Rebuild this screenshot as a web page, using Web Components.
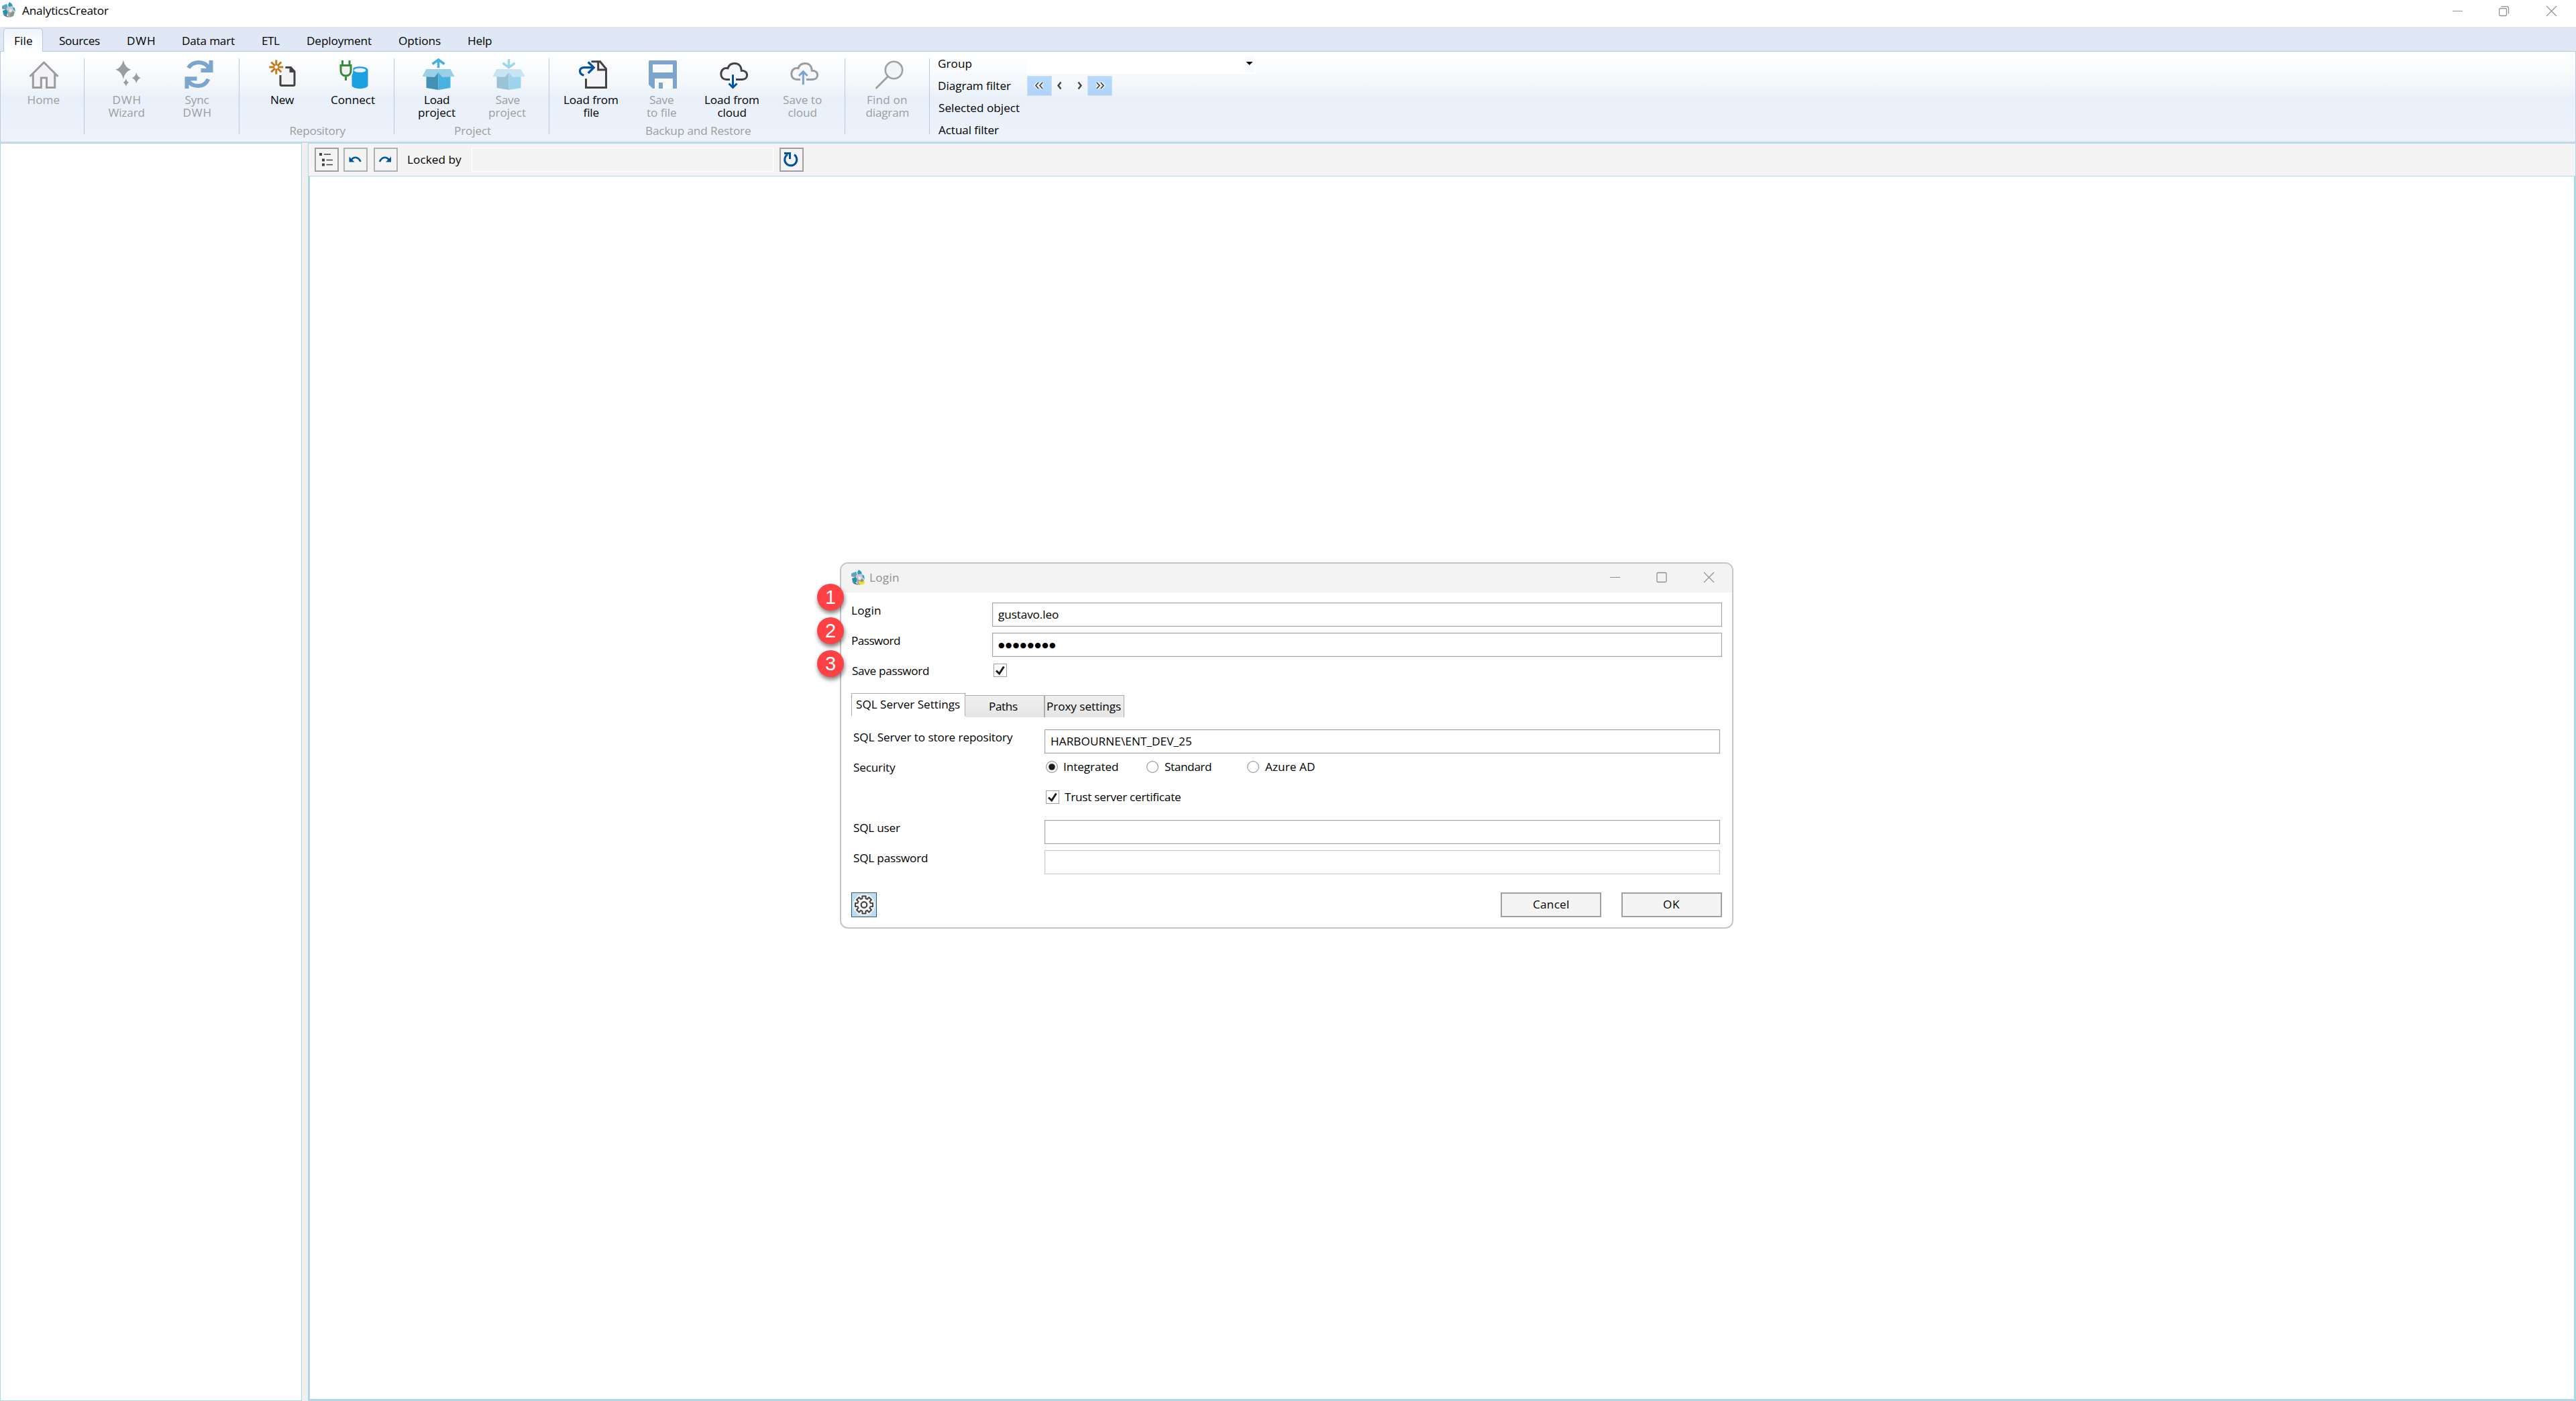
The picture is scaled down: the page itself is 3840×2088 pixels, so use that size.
<!DOCTYPE html>
<html lang="en">
<head>
<meta charset="utf-8">
<title>AnalyticsCreator</title>
<style>
html,body{margin:0;padding:0;width:3840px;height:2088px;overflow:hidden;background:#fff}
body{font-family:"Open Sans","Noto Sans",sans-serif;font-size:17.200px;color:#000}
</style>
</head>
<body>
<ac-app></ac-app>
<script>
const pen = document.createElement('canvas').getContext('2d');

function define(name, html, setup) {
  customElements.define(name, class extends HTMLElement {
    connectedCallback() {
      if (this.shadowRoot) return;
      const root = this.attachShadow({ mode: 'open' });
      const t = document.createElement('template');
      t.innerHTML = typeof html === 'function' ? html(this) : html;
      root.append(t.content.cloneNode(true));
      if (setup) setup(this, root);
    }
  });
}

/* A single line of text tracked to an exact ink width (attribute w). */
define('ac-text', el => `<style>:host{display:block;flex:none;white-space:pre;line-height:20px;height:20px;box-sizing:content-box}span{display:block}</style><span>${el.getAttribute('t')}</span>`,
  (el, root) => {
    const span = root.querySelector('span'), text = el.getAttribute('t'), w = +el.getAttribute('w');
    el.style.width = w + 'px';
    const cs = getComputedStyle(el);
    pen.font = cs.fontWeight + ' ' + cs.fontSize + ' ' + cs.fontFamily;
    const m = pen.measureText(text);
    span.style.letterSpacing = ((w - m.actualBoundingBoxRight - m.actualBoundingBoxLeft) / (text.length - 1)) + 'px';
    span.style.marginLeft = m.actualBoundingBoxLeft + 'px';
    span.style.width = (w + 10) + 'px';
  });

const star = (x, y, a, b) => `<path d="M${x} ${y-b}Q${x+a*.22} ${y-b*.22} ${x+a} ${y}Q${x+a*.22} ${y+b*.22} ${x} ${y+b}Q${x-a*.22} ${y+b*.22} ${x-a} ${y}Q${x-a*.22} ${y-b*.22} ${x} ${y-b}Z" fill="#9b9c9e"/>`;
const box = `<path d="M7.5 24V43L25.5 46V18Z" fill="#4491b5"/><path d="M43.5 24V43L25.5 46V18Z" fill="#4ab2e0"/><path d="M1.5 26L7.5 15H25.5V20L19.5 27Z" fill="#99d0e6"/><path d="M49.5 26L43.5 15H25.5V20L31.5 27Z" fill="#99d0e6"/>`;
const cloud = c => `<path d="M21 30.4H15.5C10.5 30.4 7.8 27 7.8 22.3C7.8 16.5 12 12.6 18 13.8C19.5 9 23 6.5 28 6.5C34 6.5 38 10.5 38.3 17.2C43 17.2 46.6 19.6 46.6 24C46.6 28 43.5 30.4 39.5 30.4H30" fill="#f5f7fa" stroke="${c}" stroke-width="3"/>`;
const cubes = `<path d="M10 4L12 0L16 3L17 7L11 8Z" fill="#2b9cc0"/><path d="M1 6L8 3L10 8L7 12L1 10Z" fill="#8b979b"/><path d="M1 6L8 3L9 6L3 8.500Z" fill="#3cb2d4"/><path d="M8 8L16 6L20 12L18 17L10 17Z" fill="#c3c8ca"/><path d="M2 13L8 11L10 15L8 20L3 18Z" fill="#1f91b4"/><path d="M9 14L13 10L14 21L10 23Z" fill="#a2aaad"/><path d="M14 13L20 15L18 21L12 23Z" fill="#8b9497"/><path d="M12 10L16 11L15 16L11 14Z" fill="#e6e9ea"/><path d="M2 18L8 20L11 23L5 21Z" fill="#5c6669"/><path d="M17 7L20 9L21 15L18 11Z" fill="#2b9cc0"/>`;
const ICONS = {
  home: `<path d="M8.3 20L24.5 5L40.7 20V42.5H28.5V28H20.3V42.5H8.3Z" fill="#f4f4f6"/><path d="M3.5 26L24.5 5L45.5 26M8.3 22V42.5H20.3V28H28.5V42.5H40.7V22" fill="none" stroke="#9b9c9e" stroke-width="3"/>`,
  wizard: star(18.8,15.7,11.4,14) + star(38.2,28.3,6.4,8.2) + star(22.8,35,4.6,6),
  sync: `<g fill="none" stroke="#7ba5cd" stroke-width="6"><path d="M11 13.2C17 2.5 35 1.5 42 14"/><path d="M10 32C17 43 35 43 40.5 29.8"/></g><path d="M41.5 2H47.5V20H29.5V14H37L41.5 9ZM5.500 26.300H23.500V32.300H13L11.500 36V44H5.500Z" fill="#7ba5cd"/>`,
  new: `<path d="M26 12.500H35L41 18.500V38Q41 39.500 39.500 39.500H21.500Q20 39.500 20 38V22Z" fill="#f3f3f5"/><path d="M27.500 12.500H35.500L41 18.500V38Q41 39.500 39.500 39.500H21.500Q20 39.500 20 38V24" fill="none" stroke="#424242" stroke-width="3"/><path d="M33.500 12H36L42 18V20H33.500Z" fill="#424242"/><g stroke="#c27a14" stroke-width="3"><path d="M13.800 1.500V9.500M13.800 14.500V22.500M3.300 12H11.300M16.300 12H24.300M6.300 4.500L12 10.200M15.600 13.800L21.300 19.500M21.300 4.500L15.600 10.200M12 13.800L6.300 19.500"/></g>`,
  connect: `<path d="M21.500 16.500V39C21.500 45.700 45.500 45.700 45.500 39V16.500C45.500 9.500 21.500 9.500 21.500 16.500Z" fill="#1ba1e2"/><ellipse cx="33.500" cy="16.700" rx="9" ry="3.100" fill="#eef0f3"/><path d="M5 9.500H20V17C20 22 17 25 12.500 25S5 22 5 17Z" fill="#f0f0f2" stroke="#f5f7fa" stroke-width="7"/><path d="M7.500 2V9.500M18 2V9.500M3.500 9.500H21.500M5 9.500V17C5 22 8 25 12.500 25S20 22 20 17V9.500M12.500 25V32" fill="none" stroke="#388a34" stroke-width="3"/>`,
  loadp: box + `<path d="M25.500 13V1.500M16.500 7.500L25.500 1L34.500 7.500" fill="none" stroke="#45b0de" stroke-width="3.500"/>`,
  savep: `<g opacity=".5">${box}<path d="M25.500 0V12.500M16.500 6L25.500 12.500L34.500 6" fill="none" stroke="#45b0de" stroke-width="3.500"/></g>`,
  loadf: `<path d="M16.500 43V22L24 2.700H36.300L46.500 14V43Z" fill="#f5f5f7"/><path d="M24.500 3.700H37.500L46.500 14.500V42.500H16.500V29.300M34.700 3V16H46" fill="none" stroke="#424242" stroke-width="3"/><path d="M13.500 24.300C5.500 22 5.500 12.700 13.500 12.700H28M19.700 4.500L28.200 12.700L19.700 21" fill="none" stroke="#00539c" stroke-width="3.200"/>`,
  savef: `<path fill-rule="evenodd" d="M5 4Q5 2 7 2H45Q47 2 47 4V44H41V29H14V44H11L5 38ZM11 8V20H41V8ZM20 35H26V44H20Z" fill="#7ba5cd"/><path d="M11 8H41V20H11ZM14 29H41V44H26V35H20V44H14Z" fill="#f8fafc"/>`,
  loadc: cloud('#424242') + `<path d="M25.500 23.300V42M19.500 36.500L25.500 42.500L31.500 36.500" fill="none" stroke="#00539c" stroke-width="3"/>`,
  savec: cloud('#9b9c9e') + `<path d="M25.300 38V19M19 25L25.300 18.700L31.600 25" fill="none" stroke="#7ba5cd" stroke-width="3"/>`,
  find: `<circle cx="33.500" cy="16.500" r="12.700" fill="#f3f4f6" stroke="#a0a0a0" stroke-width="2.600"/><path d="M24.500 26L7.500 43" stroke="#a0a0a0" stroke-width="3" stroke-linecap="round"/>`
};

define('ribbon-item', el => `<style>
:host{display:flex;flex-direction:column;align-items:center;width:105px;flex:none;color:#000}
:host([off]){color:#9d9d9d}
svg{width:48px;height:48px;overflow:visible;display:block;margin-bottom:3px}
ac-text{line-height:19px;height:19px}
</style><svg viewBox="0 0 48 48">${ICONS[el.getAttribute('icon')]}</svg>` +
el.getAttribute('lines').split('|').map(s => { const [t, w] = s.split(':'); return `<ac-text t="${t}" w="${w}"></ac-text>`; }).join(''));

define('ribbon-group', el => { const [t, w] = (el.getAttribute('caption') || '').split(':'); return `<style>
:host{display:flex;flex-direction:column;justify-content:space-between;align-items:center;box-sizing:border-box;height:113px;margin-top:10px;border-right:1px solid #b7cade;flex:none}
.items{display:flex;width:100%;box-sizing:border-box;padding:1px 0 0 var(--pad)}
ac-text{color:#9d9d9d;margin:0 0 -5px 4px}
</style><div class="items"><slot></slot></div>${t ? `<ac-text t="${t}" w="${w}"></ac-text>` : ''}`; });

define('menu-tabs', `<style>
:host{display:flex;height:37px;padding-top:2px;box-sizing:border-box;background:#dfe8f4;box-shadow:inset 0 -1px #b5c9e2}
.tab{box-sizing:border-box;width:59px;margin-left:5px;height:35px;border:1px solid #b5c9e2;border-bottom:0;border-radius:5px 5px 0 0;background:linear-gradient(#eff5fc,#fff);padding:8px 0 0 16px}
.rest{display:flex;padding:9px 0 0 24px}
</style><div class="tab"><ac-text t="File" w="26"></ac-text></div><div class="rest">
<ac-text t="Sources" w="61"></ac-text>
<ac-text style="margin-left:41px" t="DWH" w="40"></ac-text>
<ac-text style="margin-left:42px" t="Data mart" w="78"></ac-text>
<ac-text style="margin-left:41px" t="ETL" w="26"></ac-text>
<ac-text style="margin-left:41px" t="Deployment" w="96"></ac-text>
<ac-text style="margin-left:41px" t="Options" w="62"></ac-text>
<ac-text style="margin-left:41px" t="Help" w="35"></ac-text></div>`);

define('diagram-filter', `<style>
:host{display:flex;margin-left:13px;padding-top:4px}
.names{display:flex;flex-direction:column;gap:13px;width:132px;padding-top:4px}
.combo{width:341px;height:29px;background:#fff;display:flex;justify-content:flex-end}
.combo div{width:15px;height:24px;margin:3px 2px 0 0;background:#f8fafd;display:flex}
svg{display:block}
.nav{display:flex;height:30px;margin-top:3px}
.b{width:37px;height:30px;box-sizing:border-box;border:1px solid #d6e0ea;background:linear-gradient(#b7daff,#aed2f9)}
.s{width:26px}.t{width:27px}
</style>
<div class="names"><ac-text t="Group" w="49.500"></ac-text><ac-text t="Diagram filter" w="108"></ac-text><ac-text t="Selected object" w="121"></ac-text><ac-text t="Actual filter" w="90"></ac-text></div>
<div><div class="combo"><div><svg width="15" height="24"><path d="M2.500 8H12.500L7.500 13Z"/></svg></div></div>
<div class="nav"><div class="b"><svg width="35" height="28" fill="none"><path d="M16 9L12 13.500L16 18M22 9L18 13.500L22 18" stroke="#f0f3f6" stroke-width="5"/><path d="M16 9L12 13.500L16 18M22 9L18 13.500L22 18" stroke="#424242" stroke-width="1.700"/></svg></div>
<div class="s"><svg width="26" height="30" fill="none" stroke="#424242" stroke-width="2.400"><path d="M13.500 9.500L9.500 14.500L13.500 19.500"/></svg></div>
<div class="t"><svg width="27" height="30" fill="none" stroke="#424242" stroke-width="2.400"><path d="M13.500 9.500L17.500 14.500L13.500 19.500"/></svg></div>
<div class="b"><svg width="35" height="28" fill="none"><path d="M13 9L17 13.500L13 18M19 9L23 13.500L19 18" stroke="#f0f3f6" stroke-width="5"/><path d="M13 9L17 13.500L13 18M19 9L23 13.500L19 18" stroke="#424242" stroke-width="1.700"/></svg></div></div></div>`);

define('app-ribbon', `<style>
:host{display:flex;box-sizing:border-box;height:136px;border:1px solid #b8cbe2;border-top:0;border-bottom:2px solid #c8d8e7;background:linear-gradient(#fff 0,#fdfeff 8%,#f2f6fa 38%,#e9f0f9 52%,#ebf1fa 72%,#edf2fb 100%)}
</style>
<ribbon-group style="width:125px;--pad:11.500px"><ribbon-item off icon="home" lines="Home:47"></ribbon-item></ribbon-group>
<ribbon-group style="width:231px;--pad:10px"><ribbon-item off icon="wizard" lines="DWH:40|Wizard:54"></ribbon-item><ribbon-item off icon="sync" lines="Sync:36|DWH:40"></ribbon-item></ribbon-group>
<ribbon-group caption="Repository:83" style="width:231px;--pad:12px"><ribbon-item icon="new" lines="New:35"></ribbon-item><ribbon-item icon="connect" lines="Connect:65"></ribbon-item></ribbon-group>
<ribbon-group caption="Project:54" style="width:231px;--pad:11px"><ribbon-item icon="loadp" lines="Load:37|project:55"></ribbon-item><ribbon-item off icon="savep" lines="Save:36|project:55"></ribbon-item></ribbon-group>
<ribbon-group caption="Backup and Restore:156" style="width:441px;--pad:9.500px"><ribbon-item icon="loadf" lines="Load from:80|file:23"></ribbon-item><ribbon-item off icon="savef" lines="Save:36|to file:44"></ribbon-item><ribbon-item icon="loadc" lines="Load from:80|cloud:43"></ribbon-item><ribbon-item off icon="savec" lines="Save to:58|cloud:43"></ribbon-item></ribbon-group>
<ribbon-group style="width:126px;--pad:10px"><ribbon-item off icon="find" lines="Find on:59|diagram:64"></ribbon-item></ribbon-group>
<diagram-filter></diagram-filter>`);

define('diagram-toolbar', `<style>
:host{display:flex;align-items:flex-start;box-sizing:border-box;height:50px;padding:6px 0 0 9px;background:#f4f4f4;border:1px solid #add8e6}
.b{box-sizing:border-box;width:36px;height:36px;border:2px solid #a0a0a0;flex:none}
.g{border-color:#adb2b5}
svg{display:block;width:32px;height:32px}
.f{box-sizing:border-box;width:450px;height:36px;border:1px solid #fff;margin:0 9px 0 15px}
</style>
<div class="b"><svg viewBox="0 0 32 32"><path d="M5 6h4v4h-4zM9 14.500h4v4h-4zM9 21.500h4v4h-4z" fill="#424242"/><path d="M12 8H22M15.500 16.500H25M15.500 23.500H25" stroke="#424242" stroke-width="1.500"/></svg></div>
<div class="b g" style="margin-left:7px"><svg viewBox="0 0 32 32"><path d="M9.500 17C12 11.500 20 10.500 23.500 19" fill="none" stroke="#00539c" stroke-width="2.500"/><path d="M6.500 11.500V19.500H14.500Z" fill="#00539c"/></svg></div>
<div class="b g" style="margin-left:9px"><svg viewBox="0 0 32 32"><path d="M21 17C18.500 11.500 10.500 10.500 7 19" fill="none" stroke="#00539c" stroke-width="2.500"/><path d="M24 11.500V19.500H16Z" fill="#00539c"/></svg></div>
<ac-text style="margin:8px 0 0 15px" t="Locked by" w="80"></ac-text>
<div class="f"></div>
<div class="b"><svg viewBox="0 0 32 32"><path d="M20 8.500A9 9 0 1 1 10 8.200" fill="none" stroke="#00539c" stroke-width="3"/><path d="M5 6.500H13.500V15" fill="none" stroke="#00539c" stroke-width="3"/></svg></div>`);

define('title-bar', `<style>
:host{display:flex;justify-content:space-between;height:40px;background:#fff}
.l{display:flex;padding:3px 0 0 2px}
svg{display:block}
ac-text{margin:3px 0 0 8px}
.r{display:flex;padding:8px 28px 0 0;gap:54px}
</style><div class="l"><svg width="23" height="24">${cubes}</svg><ac-text t="AnalyticsCreator" w="129"></ac-text></div>
<div class="r" ><svg width="16" height="17"><path d="M1 8.500H16" stroke="#929292"/></svg>
<svg width="16" height="17" fill="none" stroke="#929292"><rect x=".5" y="4.500" width="11" height="11" rx="2" stroke-width="1.300"/><path d="M3.500 1.700H11.500Q14.500 1.700 14.500 4.700V12.500" stroke-width="1.300"/></svg>
<svg width="17" height="17"><path d="M1 1L16 16M16 1L1 16" stroke="#929292" stroke-width="1.200"/></svg></div>`);

define('text-field', el => `<style>
:host{display:block;box-sizing:border-box;height:36px;border:1px solid #a5a5a5;box-shadow:inset 0 0 0 1px #ececec;background:#fff;padding:7px 0 0 8px}
:host([off]){border-color:#c8c8c8;box-shadow:inset 0 0 0 1px #f6f6f6}
</style><slot></slot>`);

define('check-mark', `<style>:host{display:block;flex:none;width:20px;height:20px}svg{display:block}</style>
<svg width="20" height="20"><rect x=".5" y=".5" width="19" height="19" fill="#fff" stroke="#a0a0a0"/><path d="M4 10.500L8.700 15L15.500 4.500" fill="none" stroke="#1c1c1c" stroke-width="3"/></svg>`);

define('radio-mark', el => `<style>:host{display:block;flex:none;width:18px;height:18px}svg{display:block}</style>
<svg width="18" height="18"><circle cx="9" cy="9" r="8.400" fill="#fff" stroke="#9a9a9a" stroke-width="1.200"/>${el.hasAttribute('on') ? '<circle cx="9" cy="9" r="4.800" fill="#1c1c1c"/>' : ''}</svg>`);

define('push-button', `<style>:host{display:flex;justify-content:center;box-sizing:border-box;width:150px;height:37px;border:2px solid #a0a0a0;background:#f4f4f4;padding-top:6px}</style><slot></slot>`);

function gear(cx, cy) {
  let d = '';
  for (let i = 0; i < 8; i++) {
    for (const [a, r] of [[-.27, 9.800], [-.19, 13.300], [.19, 13.300], [.27, 9.800]]) {
      const th = i * Math.PI / 4 + a;
      d += (d ? 'L' : 'M') + (cx + r * Math.sin(th)).toFixed(2) + ' ' + (cy - r * Math.cos(th)).toFixed(2);
    }
  }
  return d + 'Z';
}

define('login-dialog', `<style>
:host{display:flex;flex-direction:column;box-sizing:border-box;border:2px solid #c5c5c5;border-radius:12px;background:#fff}
.clip{flex:1;display:flex;flex-direction:column;border-radius:10px;overflow:hidden}
.head{display:flex;justify-content:space-between;background:#f3f3f3;height:43px;box-sizing:border-box}
.hl{display:flex;padding:9px 0 0 14px}.hl ac-text{color:#8f8f8f;margin:2px 0 0 6px}
.hr{display:flex;gap:54px;padding:12px 26px 0 0}
svg{display:block}
.body{display:flex;flex-direction:column;padding:15px 15px 0 15px}
.row{display:flex;height:45px}
.row>.k{flex:none;width:210px;padding:2px 0 0 1px;box-sizing:border-box}
.row>text-field{flex:1}
.tabs{display:flex;align-items:flex-start;height:36px}
.t{box-sizing:border-box;border:1px solid #acacac;border-bottom:0;background:linear-gradient(#f0f0f0,#e5e5e5);height:33px;margin-top:3px;padding-top:6px}
.t.on{background:#fff;height:34px;margin-top:0;width:170px;padding:6px 0 0 6px}
.pane{padding:18px 3px 0 0}
.pane .k{width:288px;padding-left:3px;padding-top:2px}
.opt{display:flex;align-items:flex-start}
.foot{display:flex;padding-top:18px}
.gear{box-sizing:border-box;width:38px;height:37px;border:1px solid #22608f;background:#bddcee;margin-right:auto}
.foot push-button+push-button{margin-left:30px}
</style><div class="clip">
<div class="head"><div class="hl"><svg width="23" height="24">${cubes}<path d="M12 18C14 15 16 20 18 18C20 15 22 18 20 21C17 24 15 20 13 22Z" fill="#f1e31c"/></svg><ac-text t="Login" w="43"></ac-text></div>
<div class="hr"><svg width="16" height="17"><path d="M1 8.500H16" stroke="#8e8e8e"/></svg><svg width="16" height="17" fill="none"><rect x="1" y="1.500" width="14" height="14" rx="1.500" stroke="#8e8e8e" stroke-width="1.300"/></svg><svg width="17" height="17"><path d="M1 1L16 16M16 1L1 16" stroke="#8e8e8e" stroke-width="1.200"/></svg></div></div>
<div class="body">
<div class="row"><div class="k"><ac-text t="Login" w="43"></ac-text></div><text-field><ac-text t="gustavo.leo" w="90"></ac-text></text-field></div>
<div class="row"><div class="k"><ac-text t="Password" w="72"></ac-text></div><text-field style="padding-top:8px"><ac-text style="font-family:'DejaVu Sans';font-size:11px" t="●●●●●●●●" w="85"></ac-text></text-field></div>
<div class="row"><div class="k" style="width:212px"><ac-text t="Save password" w="115"></ac-text></div><check-mark style="margin-top:1px"></check-mark></div>
<div class="tabs"><div class="t on"><ac-text t="SQL Server Settings" w="155"></ac-text></div><div class="t" style="width:118px;padding-left:36px;border-left:0"><ac-text t="Paths" w="42"></ac-text></div><div class="t" style="width:119px;padding-left:3px"><ac-text t="Proxy settings" w="110"></ac-text></div></div>
<div class="pane">
<div class="row"><div class="k"><ac-text t="SQL Server to store repository" w="238"></ac-text></div><text-field style="padding-left:9px"><ac-text t="HARBOURNE\\ENT_DEV_25" w="209"></ac-text></text-field></div>
<div class="row"><div class="k" style="width:290px"><ac-text t="Security" w="63"></ac-text></div><div class="opt" style="padding-top:2px">
<radio-mark on></radio-mark><ac-text style="margin:-1px 51px 0 9px" t="Integrated" w="81"></ac-text><radio-mark style="margin-left:-9px"></radio-mark><ac-text style="margin:-1px 53px 0 9px" t="Standard" w="70"></ac-text><radio-mark></radio-mark><ac-text style="margin:-1px 0 0 9px" t="Azure AD" w="74"></ac-text></div></div>
<div class="row"><div class="k" style="width:290px"></div><div class="opt"><check-mark style="margin-top:1px"></check-mark><ac-text style="margin:1px 0 0 8px" t="Trust server certificate" w="173"></ac-text></div></div>
<div class="row"><div class="k"><ac-text t="SQL user" w="70"></ac-text></div><text-field></text-field></div>
<div class="row"><div class="k"><ac-text t="SQL password" w="111"></ac-text></div><text-field off></text-field></div>
</div>
<div class="foot"><div class="gear"><svg width="36" height="35"><path d="${gear(18,17.500)}" fill="#f6f6f6" stroke="#f6f6f6" stroke-width="6"/><path d="${gear(18,17.500)}" fill="#f6f6f6" stroke="#424242" stroke-width="2"/><circle cx="18" cy="17.500" r="4.300" fill="none" stroke="#424242" stroke-width="2.200"/></svg></div>
<push-button><ac-text t="Cancel" w="52"></ac-text></push-button><push-button><ac-text t="OK" w="24"></ac-text></push-button></div>
</div></div>`);

define('step-badge', `<style>:host{display:block;box-sizing:border-box;width:40px;height:40px;border-radius:50%;background:#fe4145;color:#fff;font:29px/41px "Liberation Sans",sans-serif;text-align:center;box-shadow:1px 4px 6px rgba(0,0,0,.5)}</style><slot></slot>`);

define('ac-app', `<style>
:host{display:flex;flex-direction:column;width:3840px;height:2088px;background:#fff;overflow:hidden}
.work{flex:1;display:flex;background:#f0f0f0}
.tree{box-sizing:border-box;width:450px;border:1px solid #add8e6;background:#fff}
.main{margin-left:9px;flex:1;display:flex;flex-direction:column}
.canvas{flex:1;border:3px solid #add8e6;border-top:0;background:#fff}
login-dialog{position:absolute;left:1252px;top:838px;width:1332px;height:546px}
step-badge{position:absolute;left:1218px}
</style>
<title-bar></title-bar><menu-tabs></menu-tabs><app-ribbon></app-ribbon>
<div class="work"><div class="tree"></div><div class="main"><diagram-toolbar></diagram-toolbar><div class="canvas"></div></div></div>
<login-dialog></login-dialog>
<step-badge style="top:870px">1</step-badge><step-badge style="top:920px">2</step-badge><step-badge style="top:969px">3</step-badge>`);
</script>
</body>
</html>
